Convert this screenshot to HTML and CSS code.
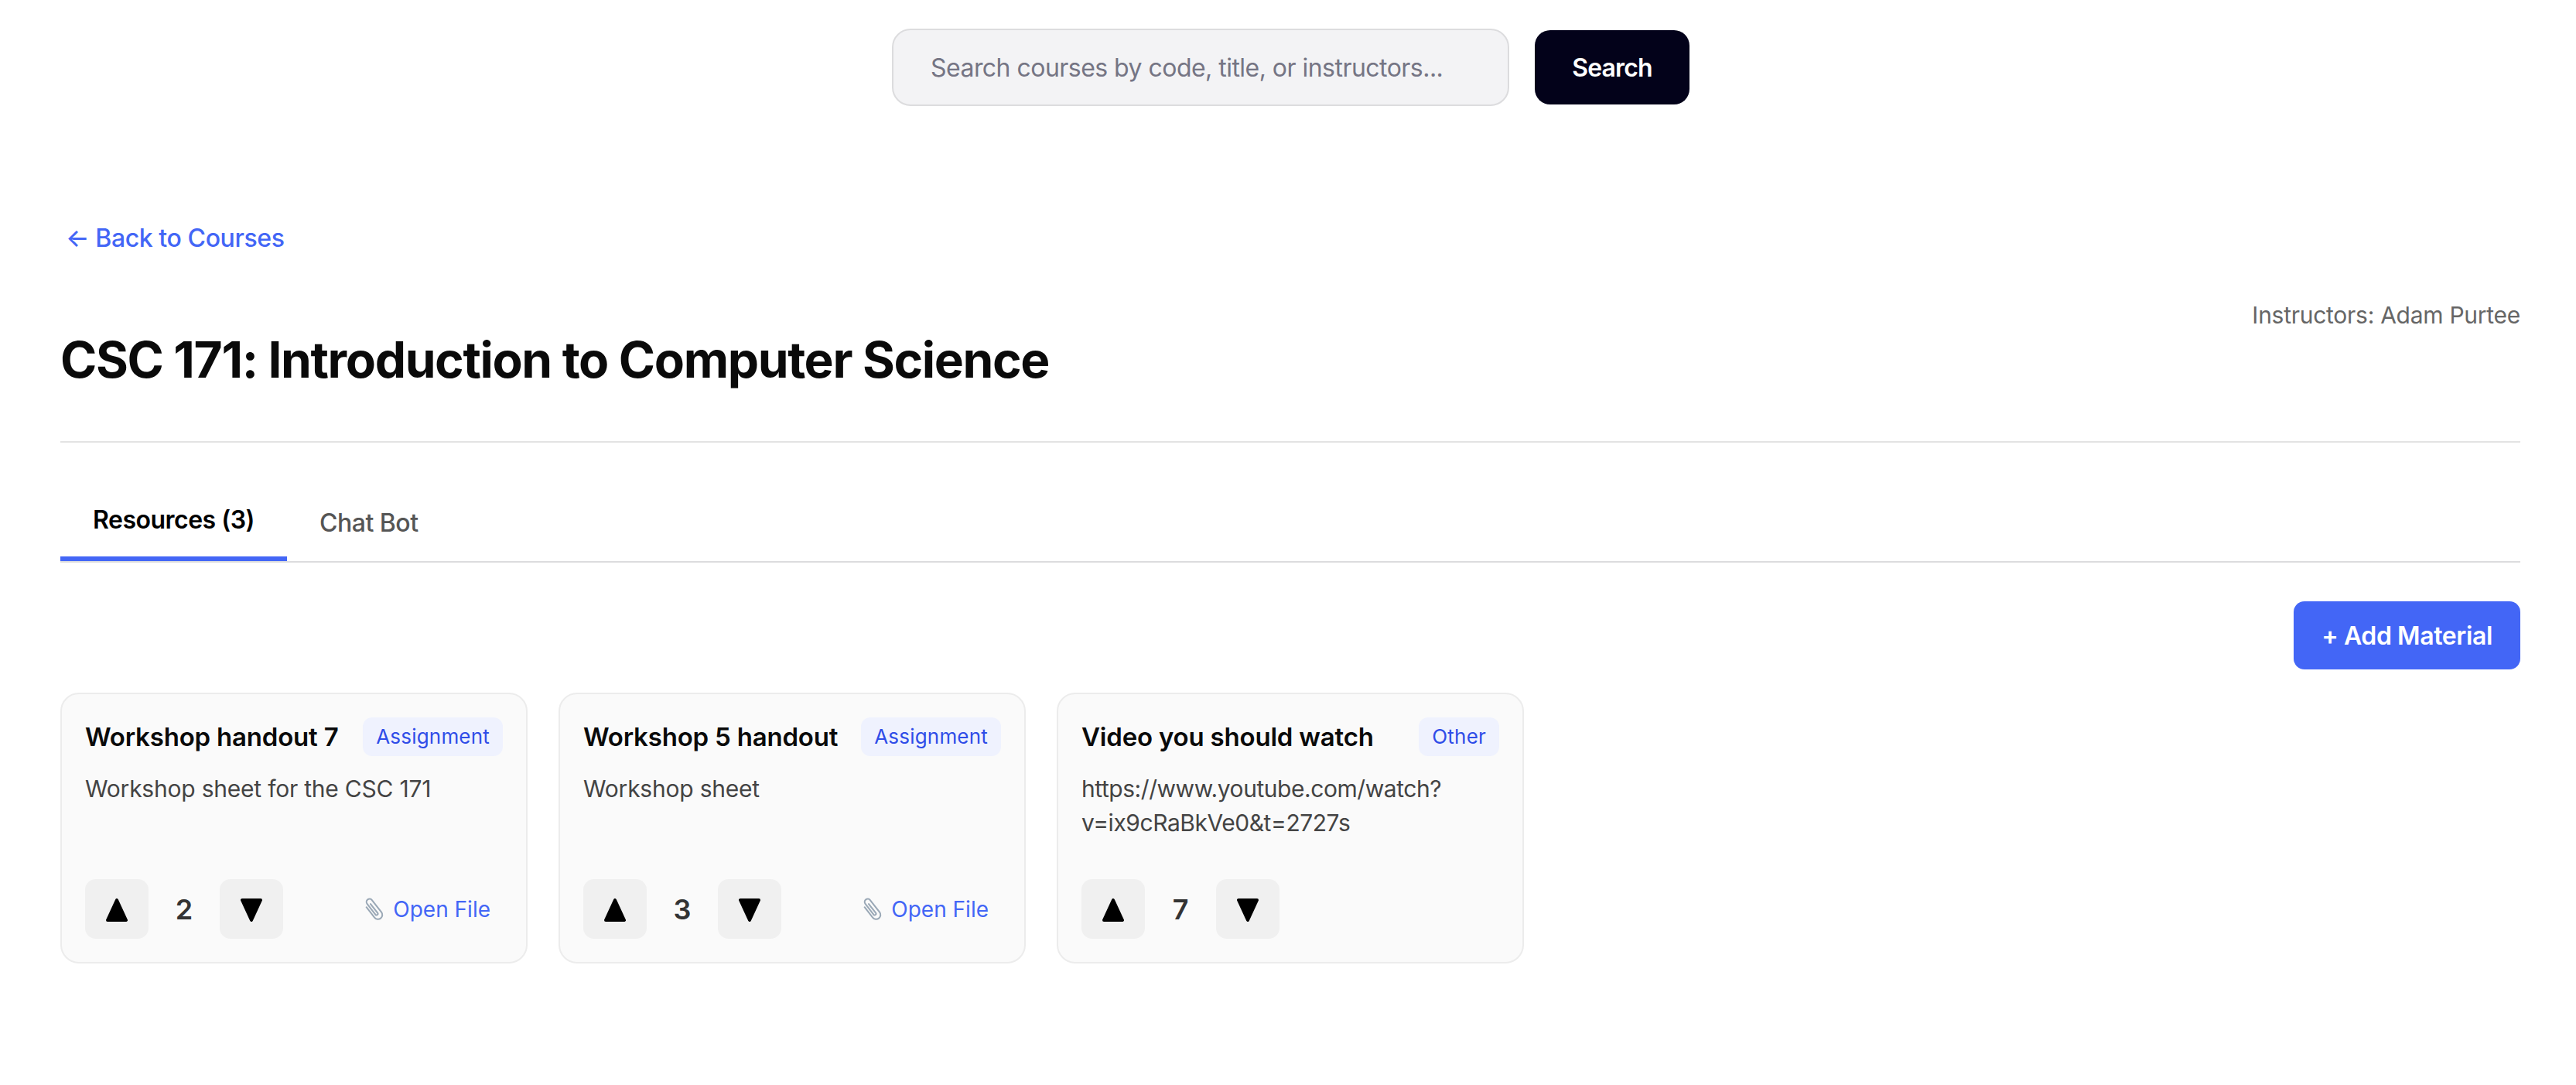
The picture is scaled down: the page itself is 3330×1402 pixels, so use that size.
FILE: index.html
```html
<!DOCTYPE html>
<html lang="en">
  <head>
    <meta charset="UTF-8" />
    <meta name="viewport" content="width=device-width, initial-scale=1.0" />
    <title>CSC 171</title>
    <link rel="stylesheet" href="styles.css">
  </head>
  <body>
    <header class="search-bar">
      <input class="search-input" type="text" placeholder="Search courses by code, title, or instructors..." />
      <button class="search-btn">Search</button>
    </header>

    <main class="container">
      <a class="back-link" href="#">← Back to Courses</a>

      <div class="course-head">
        <h1 class="course-title">CSC 171: Introduction to Computer Science</h1>
        <div class="instructors">Instructors: Adam Purtee</div>
      </div>

      <div class="tabs">
        <button class="tab tab-active">Resources (3)</button>
        <button class="tab">Chat Bot</button>
      </div>

      <div class="toolbar">
        <button class="btn-add">+ Add Material</button>
      </div>

      <div class="cards">
        <div class="card">
          <div class="card-head">
            <h3 class="card-title">Workshop handout 7</h3>
            <span class="tag">Assignment</span>
          </div>
          <p class="card-desc">Workshop sheet for the CSC 171</p>
          <div class="card-foot">
            <button class="vote"><svg class="arrow" viewBox="0 0 28 30"><polygon points="14,2 26,28 2,28" /></svg></button>
            <span class="count">2</span>
            <button class="vote"><svg class="arrow" viewBox="0 0 28 30"><polygon points="2,2 26,2 14,28" /></svg></button>
            <a class="file-link" href="#">
              <svg class="clip" viewBox="0 0 30 30"><path d="M10 8v15a5 5 0 0 0 10 0V5.500a3.500 3.500 0 0 0-7 0V21a1.500 1.500 0 0 0 3 0V8" transform="rotate(-38 15 15)" /></svg>
              Open File
            </a>
          </div>
        </div>

        <div class="card">
          <div class="card-head">
            <h3 class="card-title">Workshop 5 handout</h3>
            <span class="tag">Assignment</span>
          </div>
          <p class="card-desc">Workshop sheet</p>
          <div class="card-foot">
            <button class="vote"><svg class="arrow" viewBox="0 0 28 30"><polygon points="14,2 26,28 2,28" /></svg></button>
            <span class="count">3</span>
            <button class="vote"><svg class="arrow" viewBox="0 0 28 30"><polygon points="2,2 26,2 14,28" /></svg></button>
            <a class="file-link" href="#">
              <svg class="clip" viewBox="0 0 30 30"><path d="M10 8v15a5 5 0 0 0 10 0V5.500a3.500 3.500 0 0 0-7 0V21a1.500 1.500 0 0 0 3 0V8" transform="rotate(-38 15 15)" /></svg>
              Open File
            </a>
          </div>
        </div>

        <div class="card">
          <div class="card-head">
            <h3 class="card-title">Video you should watch</h3>
            <span class="tag">Other</span>
          </div>
          <p class="card-desc card-url">https://www.youtube.com/watch?v=ix9cRaBkVe0&amp;t=2727s</p>
          <div class="card-foot">
            <button class="vote"><svg class="arrow" viewBox="0 0 28 30"><polygon points="14,2 26,28 2,28" /></svg></button>
            <span class="count">7</span>
            <button class="vote"><svg class="arrow" viewBox="0 0 28 30"><polygon points="2,2 26,2 14,28" /></svg></button>
          </div>
        </div>
      </div>
    </main>
  </body>
</html>
```

FILE: styles.css
```css
* {
  box-sizing: border-box;
}
body {
  margin: 0;
  background-color: #fff;
  font-family: Inter, "Liberation Sans", sans-serif;
  color: #000;
}
button {
  font-family: inherit;
  cursor: pointer;
}
a {
  text-decoration: none;
}

.search-bar {
  display: flex;
  justify-content: center;
  align-items: center;
  gap: 33px;
  padding: 37px 0 0 7px;
}
.search-input {
  width: 798px;
  height: 100px;
  padding: 0 48px;
  background-color: #f3f3f5;
  border: 2px solid #dcdcde;
  border-radius: 24px;
  font-family: inherit;
  font-size: 32px;
  letter-spacing: -0.53px;
  outline: none;
}
.search-input::placeholder {
  color: #757584;
  opacity: 1;
}
.search-btn {
  width: 200px;
  height: 96px;
  background-color: #03021a;
  border: none;
  border-radius: 20px;
  color: #fff;
  font-size: 32px;
  font-weight: 600;
  letter-spacing: -0.9px;
}

.container {
  padding: 0 72px 0 78px;
}
.back-link {
  display: inline-block;
  margin-top: 151px;
  padding-left: 7px;
  line-height: 40px;
  font-size: 32px;
  font-weight: 500;
  letter-spacing: -0.4px;
  color: #4366f6;
}

.course-head {
  display: flex;
  justify-content: space-between;
  align-items: flex-start;
  height: 244px;
  padding-top: 59px;
  border-bottom: 2px solid #e3e3e3;
}
.course-title {
  margin: 40px 0 0;
  line-height: 76px;
  font-size: 64px;
  font-weight: 700;
  letter-spacing: -1.36px;
  color: #0a0a0a;
}
.instructors {
  line-height: 40px;
  font-size: 30px;
  letter-spacing: -0.27px;
  color: #666;
}

.tabs {
  display: flex;
  align-items: flex-end;
  height: 155px;
  border-bottom: 2px solid #dcdcde;
}
.tab {
  padding: 0 42px 29px;
  background: none;
  border: none;
  line-height: 40px;
  font-size: 32px;
  font-weight: 500;
  letter-spacing: -0.5px;
  color: #555;
}
.tab-active {
  padding-bottom: 27px;
  border-bottom: 6px solid #4366f6;
  font-weight: 600;
  color: #000;
}

.toolbar {
  display: flex;
  justify-content: flex-end;
  margin: 50px 0 30px;
}
.btn-add {
  width: 293px;
  height: 88px;
  background-color: #4366f6;
  border: none;
  border-radius: 14px;
  color: #fff;
  font-size: 32px;
  font-weight: 600;
  letter-spacing: -0.4px;
}

.cards {
  display: grid;
  grid-template-columns: repeat(auto-fill, 604px);
  gap: 40px;
}
.card {
  display: flex;
  flex-direction: column;
  height: 350px;
  padding: 30px;
  background-color: #fafafa;
  border: 2px solid #ececec;
  border-radius: 24px;
}
.card-head {
  display: flex;
  justify-content: space-between;
  align-items: center;
  height: 50px;
}
.card-title {
  margin: 0;
  font-size: 33px;
  font-weight: 600;
  letter-spacing: -0.2px;
  color: #0a0a0a;
}
.tag {
  padding: 0 17px;
  line-height: 50px;
  background-color: #eff2fe;
  border-radius: 12px;
  font-size: 26px;
  letter-spacing: 0.2px;
  color: #2f4de8;
}
.card-desc {
  margin: 20px 0 0;
  line-height: 44px;
  font-size: 30px;
  letter-spacing: -0.22px;
  color: #444;
  overflow-wrap: anywhere;
}
.card-url {
  letter-spacing: -0.45px;
}
.card-foot {
  display: flex;
  align-items: center;
  margin-top: auto;
}
.vote {
  display: flex;
  justify-content: center;
  align-items: center;
  width: 82px;
  height: 77px;
  padding: 3px 0 0;
  background-color: #f0f0f0;
  border: none;
  border-radius: 14px;
}
.arrow {
  width: 28px;
  height: 30px;
}
.arrow polygon {
  fill: #000;
  stroke: #000;
  stroke-width: 4;
  stroke-linejoin: round;
}
.count {
  width: 92px;
  text-align: center;
  font-size: 36px;
  font-weight: 600;
  color: #333;
}
.file-link {
  display: flex;
  align-items: center;
  gap: 8px;
  margin-left: auto;
  padding-right: 16px;
  font-size: 28px;
  color: #4366f6;
}
.clip {
  width: 34px;
  height: 34px;
}
.clip path {
  fill: none;
  stroke: #9aa8b6;
  stroke-width: 1.800;
  stroke-linecap: round;
}
```
